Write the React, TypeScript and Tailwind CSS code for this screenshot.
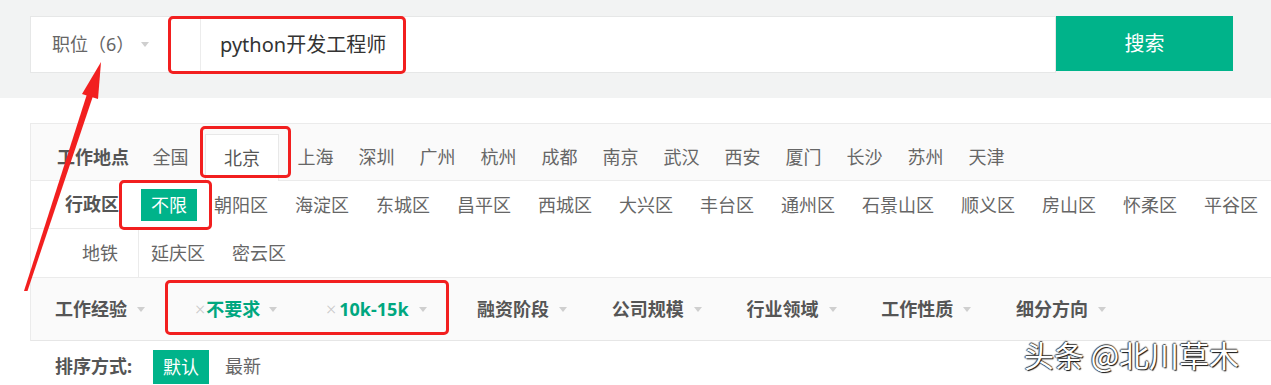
import React from "react";

const GREEN = "bg-[#00b38a]";

function Caret() {
  return (
    <span className="inline-block w-0 h-0 border-l-[4px] border-r-[4px] border-t-[5px] border-l-transparent border-r-transparent border-t-[#cfcfcf]" />
  );
}

const cities = ["上海", "深圳", "广州", "杭州", "成都", "南京", "武汉", "西安", "厦门", "长沙", "苏州", "天津"];
const regions = [
  "朝阳区", "海淀区", "东城区", "昌平区", "西城区", "大兴区", "丰台区", "通州区",
  "石景山区", "顺义区", "房山区", "怀柔区", "平谷区", "延庆区", "密云区",
];

function RedBox({ cls }: { cls: string }) {
  return <div className={`absolute border-[3px] border-[#f21f1f] rounded-[5px] pointer-events-none ${cls}`} />;
}

export default function App() {
  return (
    <div
      className="relative w-[1271px] h-[385px] overflow-hidden bg-white text-[#555]"
      style={{ fontFamily: '"Noto Sans", "Noto Sans CJK SC", sans-serif' }}
    >
      {/* Search band */}
      <div className="h-[98px] bg-[#f2f3f3] pt-[16px] pl-[30px] flex items-start">
        <div className="flex w-[1026px] h-[57px] bg-white border border-[#e6e7e7]">
          <div className="w-[169px] flex items-center pl-[21px] text-[18px] text-[#666]">
            <span>职位（6）</span>
            <span className="ml-[7px] flex items-center">
              <Caret />
            </span>
          </div>
          <div className="flex-1 border-l border-[#ececec] flex items-center pl-[19px] text-[20px] text-[#333]">
            python开发工程师
          </div>
        </div>
        <div className={`w-[177px] h-[55px] ${GREEN} flex items-center justify-center text-white text-[20px]`}>
          搜索
        </div>
      </div>

      {/* Filter box */}
      <div className="ml-[30px] mt-[25px] w-[1300px] border border-[#ebebeb] border-b-[#e6e6e6]">
        {/* Row 1 */}
        <div className="h-[57px] bg-[#fafafa] border-b border-[#ebebeb] flex items-end text-[18px]">
          <div className="h-[46px] flex items-center ml-[26px] font-bold text-[#555] w-[72px] whitespace-nowrap">工作地点</div>
          <div className="h-[46px] flex items-center ml-[11px] px-[12.5px] text-[#666]">全国</div>
          <div className="h-[47px] -mb-px ml-[4px] mr-[6px] px-[18px] flex items-center bg-white border-x border-t border-[#e8e8e8] text-[#555]">
            北京
          </div>
          {cities.map((c) => (
            <div key={c} className="h-[46px] flex items-center px-[12.5px] text-[#666]">
              {c}
            </div>
          ))}
        </div>

        {/* Rows 2-3 */}
        <div className="flex text-[18px]">
          <div className="w-[108px] shrink-0 flex flex-col">
            <div className="h-[47px] flex items-center justify-end pr-[20px] font-bold text-[#555]">行政区</div>
            <div className="h-[49px] flex items-center justify-end pr-[20px] border-t border-r border-[#ebebeb] text-[#666]">
              地铁
            </div>
          </div>
          <div className="ml-[2px] w-[1160px] flex flex-wrap gap-x-[7px] content-start">
            <div className="h-[48px] flex items-center">
              <span className={`px-[10px] leading-[32px] ${GREEN} text-white`}>不限</span>
            </div>
            {regions.map((r) => (
              <div key={r} className="h-[48px] flex items-center">
                <span className="px-[10px] text-[#666]">{r}</span>
              </div>
            ))}
          </div>
        </div>

        {/* Row 4 */}
        <div className="h-[63px] border-t border-[#ebebeb] bg-[#fafafa] flex items-center pl-[24px] text-[18px] font-bold text-[#555]">
          <div className="w-[140px] flex items-center whitespace-nowrap">
            <span>工作经验</span>
            <span className="ml-[10px] flex items-center"><Caret /></span>
          </div>
          <div className="w-[131px] flex items-center whitespace-nowrap">
            <span className="text-[18px] leading-none font-light text-[#c8c8c8]">×</span>
            <span className="ml-[1px] text-[#00a77f]">不要求</span>
            <span className="ml-[9px] flex items-center"><Caret /></span>
          </div>
          <div className="w-[151px] flex items-center whitespace-nowrap">
            <span className="text-[18px] leading-none font-light text-[#c8c8c8]">×</span>
            <span className="ml-[3px] text-[#00a77f]">10k-15k</span>
            <span className="ml-[10px] flex items-center"><Caret /></span>
          </div>
          {["融资阶段", "公司规模", "行业领域", "工作性质", "细分方向"].map((t) => (
            <div key={t} className="w-[134.75px] flex items-center whitespace-nowrap">
              <span>{t}</span>
              <span className="ml-[10px] flex items-center"><Caret /></span>
            </div>
          ))}
        </div>
      </div>

      {/* Sort row */}
      <div className="flex items-start pl-[55px] pt-[9px] text-[18px]">
        <div className="w-[98px] h-[33px] flex items-center font-bold text-[#555] whitespace-nowrap">排序方式:</div>
        <div className={`h-[34px] px-[10px] flex items-center ${GREEN} text-white`}>默认</div>
        <div className="h-[33px] ml-[16px] flex items-center text-[#666]">最新</div>
      </div>

      {/* Annotations */}
      <RedBox cls="left-[168px] top-[16px] w-[238px] h-[58px]" />
      <RedBox cls="left-[200px] top-[126px] w-[91px] h-[52px]" />
      <RedBox cls="left-[119px] top-[180px] w-[93px] h-[50px]" />
      <RedBox cls="left-[165px] top-[280px] w-[284px] h-[55px]" />

      <svg className="absolute left-0 top-0 pointer-events-none" width="1271" height="385" viewBox="0 0 1271 385">
        <polygon points="24,291 27.5,291 93,96 87,94" fill="#f21f1f" />
        <polygon points="101,62 82,94 98,99" fill="#f21f1f" />
      </svg>

      {/* Watermark */}
      <div
        className="absolute left-[1024px] top-[334px] text-[30px] leading-[40px] text-white whitespace-nowrap [text-shadow:1px_1px_1px_#111,-1px_0_1px_#444,0_-1px_1px_#444]"
        style={{ fontFamily: '"Noto Sans CJK SC", sans-serif' }}
      >
        头条 @北川草木
      </div>
    </div>
  );
}
